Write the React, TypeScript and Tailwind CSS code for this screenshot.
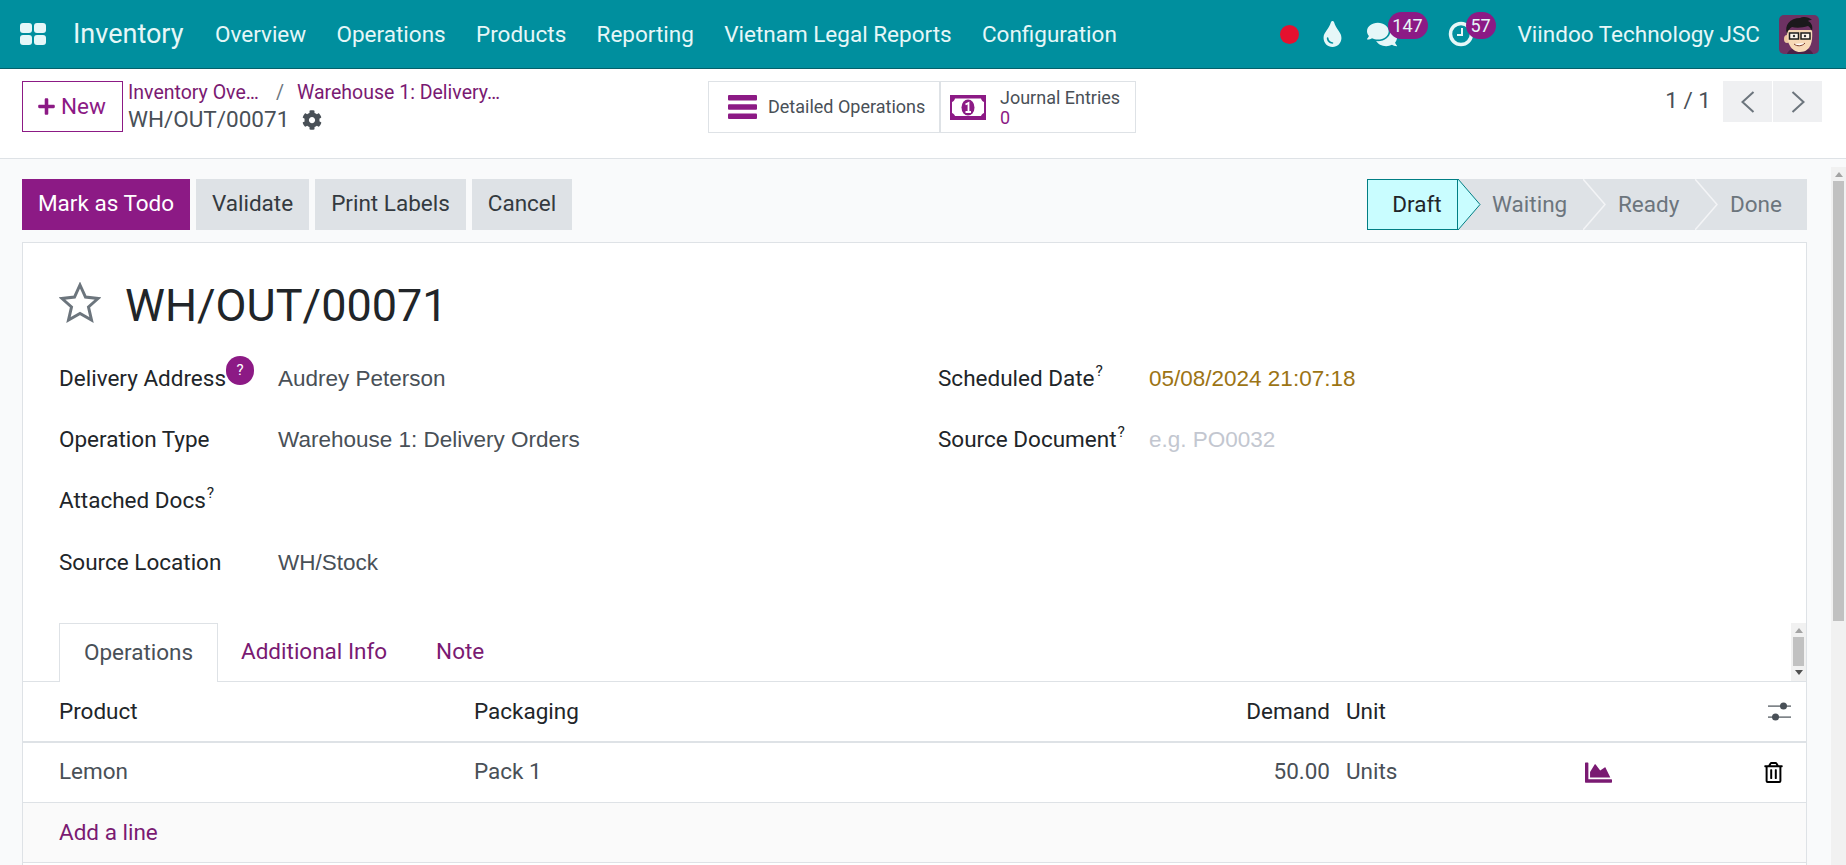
import { FaChartArea, FaCog, FaComments, FaPlus, FaRegTrashAlt, FaTint } from 'react-icons/fa';

const menu = ['Overview', 'Operations', 'Products', 'Reporting', 'Vietnam Legal Reports', 'Configuration'];

function Tip() {
  return <sup className="text-[15.5px] ml-[1px] top-[-10px]">?</sup>;
}

function Field({ label, value, tip, width, valueClass }: { label: string; value?: string; tip?: boolean; width: string; valueClass?: string }) {
  return (
    <div className="flex items-center h-[61.3px]">
      <div className={`${width} shrink-0 text-[#212529]`}>
        {label}
        {tip && <Tip />}
      </div>
      {value && <div className={`[font-family:'Liberation_Sans',sans-serif] text-[22.5px] ${valueClass ?? 'text-[#495057]'}`}>{value}</div>}
    </div>
  );
}

function Step({ label, width, pad }: { label: string; width: string; pad: string }) {
  return (
    <div className={`relative h-full ${width} ${pad} flex items-center text-[#6c757d]`}>
      {label}
      <svg className="absolute top-0 right-[-22px] z-10" width="23" height="51" viewBox="0 0 23 51">
        <polyline points="0,0 22,25.5 0,51" fill="#dee2e6" stroke="#f3f4f6" strokeWidth="1.5" />
      </svg>
    </div>
  );
}

function Avatar() {
  return (
    <svg width="40" height="39" viewBox="0 0 40 39" className="rounded-[5px]">
      <rect width="40" height="39" fill="#6d3263" />
      <path d="M8 39c1-4 6-6 13-6s12 2 13 6z" fill="#4a2248" />
      <ellipse cx="8" cy="24" rx="3" ry="4" fill="#eec7a0" />
      <path d="M8 15h25c1 11-1 22-12 22C12 37 7 27 8 15z" fill="#f7d9b6" />
      <path d="M8 19C5 10 11 3 21 3c3-2 9-1 12 2-2 0-3 0-4 1 4 2 5 6 4 10-1-2-2-4-4-5-6 2-12 2-16 1-2 1-4 3-5 7z" fill="#1b191c" />
      <rect x="10.500" y="18" width="9" height="6" fill="#fdf6ec" stroke="#1d1d1d" strokeWidth="1.500" />
      <rect x="22" y="18" width="9" height="6" fill="#fdf6ec" stroke="#1d1d1d" strokeWidth="1.500" />
      <circle cx="15" cy="21" r="1.200" fill="#333" />
      <circle cx="26" cy="21" r="1.200" fill="#333" />
      <path d="M15 29c3 2.500 8 2.500 11-1" fill="#fff" stroke="#7a3b2a" strokeWidth="1" />
    </svg>
  );
}

function MoneyIcon() {
  return (
    <svg width="36" height="25" viewBox="0 0 36 25">
      <rect width="36" height="25" fill="#8c1a85" />
      <path d="M5 3.500h26c.5 2 1.500 3 3 3.500v11c-1.500.5-2.500 1.500-3 3H5c-.5-1.500-1.500-2.500-3-3V7c1.500-.5 2.500-1.500 3-3.500z" fill="#fff" />
      <ellipse cx="18" cy="12.500" rx="6.500" ry="8" fill="#8c1a85" />
      <path d="M15.500 9.500l3-1.500v9M15.500 17h5.500" fill="none" stroke="#fff" strokeWidth="1.800" />
    </svg>
  );
}

function BarsIcon() {
  return (
    <svg width="29" height="24" viewBox="0 0 29 24" fill="#8c1a85">
      <rect width="29" height="5.500" rx="1" />
      <rect y="9.250" width="29" height="5.500" rx="1" />
      <rect y="18.500" width="29" height="5.500" rx="1" />
    </svg>
  );
}

function PagerArrow({ points }: { points: string }) {
  return (
    <svg width="14" height="22" viewBox="0 0 14 22" fill="none" stroke="#6c757d" strokeWidth="2">
      <polyline points={points} />
    </svg>
  );
}

export default function App() {
  return (
    <div className="w-[1846px] h-[865px] overflow-hidden flex flex-col bg-[#f9fafb] text-[22.5px] text-[#212529] [font-family:Roboto,sans-serif]">
      {/* Top bar */}
      <div className="h-[69px] shrink-0 bg-[#008f9e] border-b border-[#05606a] flex items-center pl-[20px] text-[#e6f7f8]">
        <div className="w-[26px] h-[22px] grid grid-cols-2 gap-[2px]">
          <span className="bg-[#e6f7f8] rounded-[3px]" />
          <span className="bg-[#e6f7f8] rounded-[3px]" />
          <span className="bg-[#e6f7f8] rounded-[3px]" />
          <span className="bg-[#e6f7f8] rounded-[3px]" />
        </div>
        <span className="ml-[27px] text-[27px] w-[142px]">Inventory</span>
        <div className="flex gap-[30.3px] pt-[1px]">
          {menu.map((m) => (
            <span key={m}>{m}</span>
          ))}
        </div>
        <div className="ml-auto flex items-center">
          <span className="w-[19px] h-[19px] rounded-full bg-[#e4112f]" />
          <FaTint className="ml-[24px] w-[19px] h-[26px]" />
          <div className="relative ml-[25px] w-[30px]">
            <FaComments className="w-[30px] h-[27px]" />
            <span className="absolute top-[-9px] left-[21px] w-[40px] h-[27px] rounded-[14px] bg-[#8c1a85] text-[18px] flex items-center justify-center">147</span>
          </div>
          <div className="relative ml-[51px] w-[26px]">
            <svg width="26" height="26" viewBox="0 0 26 26" fill="none" stroke="currentColor">
              <circle cx="13" cy="13" r="10.500" strokeWidth="3.500" />
              <path d="M14 7v7H9" strokeWidth="2" />
            </svg>
            <span className="absolute top-[-9px] left-[18px] w-[30px] h-[27px] rounded-[14px] bg-[#8c1a85] text-[18px] flex items-center justify-center">57</span>
          </div>
          <span className="ml-[44px] pt-[1px]">Viindoo Technology JSC</span>
          <div className="ml-[19px] mr-[27px] h-[39px]">
            <Avatar />
          </div>
        </div>
      </div>

      {/* Control panel */}
      <div className="h-[90px] shrink-0 bg-white border-b border-[#dee2e6] flex items-start pt-[12px] pl-[22px]">
        <button className="w-[101px] h-[51px] border border-[#8c1a85] text-[#8c1a85] flex items-center justify-center gap-[5px] pr-[2px]">
          <FaPlus className="w-[19px] h-[19px]" />
          New
        </button>
        <div className="ml-[5px] w-[580px] text-[19.500px] leading-[27px] -mt-[2px]">
          <div className="flex text-[#7a1a72]">
            <span className="w-[148px]">Inventory Ove…</span>
            <span className="w-[21px] text-[#6c757d]">/</span>
            <span>Warehouse 1: Delivery…</span>
          </div>
          <div className="flex items-center text-[22.5px] text-[#495057]">
            WH/OUT/00071
            <FaCog className="ml-[13px] w-[20px] h-[20px]" />
          </div>
        </div>
        <div className="h-[52px] w-[428px] border border-[#dee2e6] flex text-[#495057] text-[18px]">
          <div className="w-[232px] border-r-2 border-[#dee2e6] flex items-center pl-[19px]">
            <BarsIcon />
            <span className="ml-[11px] -mt-[2px]">Detailed Operations</span>
          </div>
          <div className="flex items-center pl-[9px]">
            <MoneyIcon />
            <div className="ml-[14px] mt-[1px] leading-[20px]">
              Journal Entries
              <div className="text-[#8c1a85]">0</div>
            </div>
          </div>
        </div>
        <div className="ml-auto mr-[24px] flex items-center text-[#495057]">
          <span className="mr-[12px] -mt-[2px]">1 / 1</span>
          <div className="w-[49px] h-[41px] bg-[#eff0f2] flex items-center justify-center mr-[1px]">
            <PagerArrow points="12.500,1 1.500,11 12.500,21" />
          </div>
          <div className="w-[49px] h-[41px] bg-[#eff0f2] flex items-center justify-center">
            <PagerArrow points="1.500,1 12.500,11 1.500,21" />
          </div>
        </div>
      </div>

      {/* Content */}
      <div className="flex-1 min-h-0 flex">
        <div className="flex-1 min-w-0 pt-[20px] pl-[22px] pr-[24px] flex flex-col">
          <div className="h-[51px] shrink-0 flex items-stretch">
            <button className="w-[168px] pb-[2px] bg-[#8c1a85] text-white">Mark as Todo</button>
            <button className="ml-[6px] w-[113px] pb-[2px] bg-[#dee2e6] text-[#343a40]">Validate</button>
            <button className="ml-[6px] w-[151px] pb-[2px] bg-[#dee2e6] text-[#343a40]">Print Labels</button>
            <button className="ml-[6px] w-[100px] pb-[2px] bg-[#dee2e6] text-[#343a40]">Cancel</button>
            <div className="ml-auto flex bg-[#dee2e6]">
              <div className="relative w-[91px] h-full bg-[#c9fdff] border border-[#017e84] flex items-center justify-center pl-[9px]">
                Draft
                <svg className="absolute top-[-1px] right-[-24px] z-20" width="23" height="51" viewBox="0 0 23 51">
                  <polyline points="0,0 22,25.5 0,51" fill="#c9fdff" stroke="#017e84" strokeWidth="1" />
                </svg>
              </div>
              <Step label="Waiting" width="w-[126px]" pad="pl-[34px]" />
              <Step label="Ready" width="w-[112px]" pad="pl-[34px]" />
              <div className="w-[111px] pl-[34px] flex items-center text-[#6c757d]">Done</div>
            </div>
          </div>

          <div className="mt-[12px] flex-1 min-h-0 bg-white border border-[#dee2e6] border-b-0">
            <div className="pl-[36px] pt-[32px] h-[94px] flex items-start">
              <svg width="42" height="41" viewBox="0 0 42 41" className="mt-[7px]" fill="none" stroke="#6c757d" strokeWidth="3">
                <polygon points="21,3 26.500,15 39,16.500 29.500,25 32.500,38 21,31.500 9.500,38 12.500,25 3,16.500 15.500,15" />
              </svg>
              <span className="ml-[24px] text-[45px] leading-[62px]">WH/OUT/00071</span>
            </div>
            <div className="mt-[11px] pl-[36px] flex">
              <div className="w-[879px]">
                <div className="relative">
                  <Field label="Delivery Address" value="Audrey Peterson" width="w-[219px]" />
                  <span className="absolute top-[8px] left-[167px] w-[28px] h-[29px] rounded-full bg-[#8c1a85] text-white text-[15px] flex items-center justify-center">?</span>
                </div>
                <Field label="Operation Type" value="Warehouse 1: Delivery Orders" width="w-[219px]" />
                <Field label="Attached Docs" tip width="w-[219px]" />
                <Field label="Source Location" value="WH/Stock" width="w-[219px]" />
              </div>
              <div>
                <Field label="Scheduled Date" tip value="05/08/2024 21:07:18" width="w-[211px]" valueClass="text-[#9c7414]" />
                <Field label="Source Document" tip value="e.g. PO0032" width="w-[211px]" valueClass="text-[#c3c7d0]" />
              </div>
            </div>

            <div className="mt-[30px] h-[59px] border-b border-[#dee2e6] pl-[36px] flex items-stretch">
              <div className="w-[159px] h-[59px] bg-white border border-[#dee2e6] border-b-0 flex items-center justify-center text-[#495057]">Operations</div>
              <div className="ml-[23px] flex items-center text-[#7a1a72]">Additional Info</div>
              <div className="ml-[49px] flex items-center text-[#7a1a72]">Note</div>
              <div className="ml-auto w-[15px] h-[58px] bg-[#f1f1f1] flex flex-col items-center">
                <span className="mt-[5px] border-x-[4px] border-x-transparent border-b-[5px] border-b-[#a3a3a3]" />
                <span className="mt-[4px] w-[11px] h-[29px] bg-[#c1c1c1]" />
                <span className="mt-[4px] border-x-[4px] border-x-transparent border-t-[5px] border-t-[#505050]" />
              </div>
            </div>

            <div className="h-[61px] border-b-2 border-[#dee2e6] pl-[36px] flex items-center">
              <span className="w-[415px]">Product</span>
              <span className="w-[856px]">
                <span className="inline-block w-[600px]">Packaging</span>
                <span className="inline-block w-[256px] text-right">Demand</span>
              </span>
              <span className="ml-[16px] w-[422px]">Unit</span>
              <svg width="23" height="19" viewBox="0 0 23 19" className="text-[#495057]" fill="currentColor">
                <rect x="0" y="3.500" width="23" height="1.200" />
                <rect x="0" y="14.500" width="23" height="1.200" />
                <circle cx="15.500" cy="4" r="3.500" />
                <circle cx="7.500" cy="15" r="3.500" />
              </svg>
            </div>
            <div className="h-[60px] border-b border-[#dee2e6] pl-[36px] flex items-center text-[#495057]">
              <span className="w-[415px] pb-[1px]">Lemon</span>
              <span className="w-[856px] pb-[1px]">
                <span className="inline-block w-[600px]">Pack 1</span>
                <span className="inline-block w-[256px] text-right">50.00</span>
              </span>
              <span className="ml-[16px] w-[239px] pb-[1px]">Units</span>
              <FaChartArea className="w-[27px] h-[27px] text-[#7a1a72]" />
              <FaRegTrashAlt className="ml-[152px] w-[19px] h-[21px] text-black" />
            </div>
            <div className="h-[60px] bg-[#fafafa] border-b border-[#dee2e6] pl-[36px] flex items-center text-[#7a1a72]">Add a line</div>
          </div>
        </div>

        {/* Page scrollbar */}
        <div className="w-[15px] shrink-0 mt-[8px] bg-[#f1f1f1] flex flex-col items-center">
          <span className="mt-[5px] border-x-[4px] border-x-transparent border-b-[5px] border-b-[#a3a3a3]" />
          <span className="mt-[4px] w-[11px] h-[440px] bg-[#c1c1c1]" />
        </div>
      </div>
    </div>
  );
}
